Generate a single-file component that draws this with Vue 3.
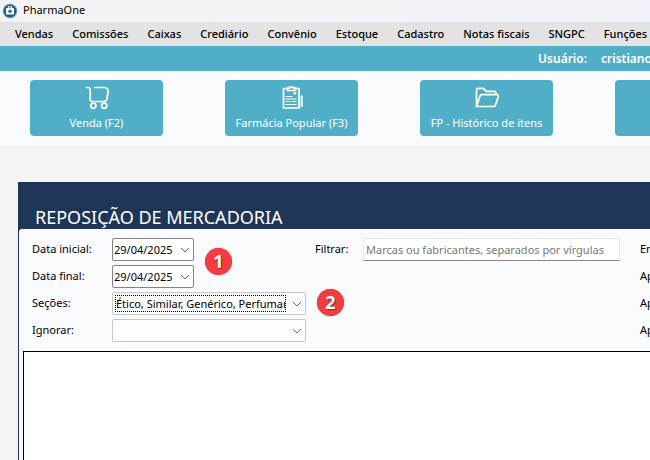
<script setup>
import { ref } from 'vue'

const menus = [
  'Vendas', 'Comissões', 'Caixas', 'Crediário', 'Convênio',
  'Estoque', 'Cadastro', 'Notas fiscais', 'SNGPC', 'Funções a'
]

const shortcuts = [
  { icon: 'cart', label: 'Venda (F2)' },
  { icon: 'clipboard', label: 'Farmácia Popular (F3)' },
  { icon: 'folder', label: 'FP - Histórico de itens' },
  { icon: '', label: '' }
]

const options = ['En', 'Ap', 'Ap', 'Ap']

const startDate = ref('29/04/2025')
const endDate = ref('29/04/2025')
const sections = ref('Ético, Similar, Genérico, Perfumaria')
const ignored = ref('')
const brandFilter = ref('')
</script>

<template>
  <div class="app">
    <header class="titlebar">
      <svg class="logo" viewBox="0 0 16 16">
        <circle cx="8" cy="8" r="7.5" fill="#9db4c4" />
        <circle cx="8" cy="8" r="6.5" fill="#17608f" />
        <path d="M6.3 5V3.8h3.4V5" fill="none" stroke="#fff" />
        <rect x="4" y="5" width="8" height="6.5" rx="1" fill="#fff" />
        <path d="M8 6.3v4M6 8.3h4" stroke="#17608f" stroke-width="1.3" />
      </svg>
      <span>PharmaOne</span>
    </header>

    <nav class="menubar">
      <button v-for="menu in menus" :key="menu" type="button">{{ menu }}</button>
    </nav>

    <div class="userbar">
      <span>Usuário:</span>
      <span class="user">cristiano</span>
    </div>

    <div class="toolbar">
      <button v-for="(item, index) in shortcuts" :key="index" class="shortcut" type="button">
        <svg v-if="item.icon === 'cart'" viewBox="0 0 24 24">
          <path d="M.8 1.500h2.400c1.500 0 2 .8 2 2v3.200c.2 3 .3 4.600 0 5.900-.5 1.800.6 2.900 2.400 2.900h11.400c1.800 0 2.500-1 2.900-2.600l1.100-6.400c.5-3-.6-5-3.600-5H9" />
          <circle cx="8.300" cy="19.800" r="2.600" />
          <circle cx="19.200" cy="19.800" r="2.600" />
        </svg>
        <svg v-else-if="item.icon === 'clipboard'" viewBox="0 0 24 24">
          <path d="M7.500 2.500H3.500v19.500h15.500V2.500h-4" />
          <path d="M7.500 4.500V2.200h2V1h4v1.200h2v2.300z" />
          <path d="M14.800 5.500v3.500M13 7.200h3.500M5.500 10.500h7M5.500 13h11M5.500 15.500h11M5.500 18.500h11" stroke-width="1" />
          <path d="M21.700 9.500v11.500" stroke-width="2" />
        </svg>
        <svg v-else-if="item.icon === 'folder'" viewBox="0 0 24 24">
          <path d="M1.500 20.500V4.200c0-1.200.6-1.900 1.800-1.900h5l3.200 3.100h7.700c1.100 0 1.600.6 1.600 1.700v1.700M1.500 20.500h17.200c1 0 1.500-.5 1.700-1.300l3.100-9c.3-1-.1-1.500-1.100-1.500H6.800c-1 0-1.500.4-1.800 1.300z" />
        </svg>
        <span>{{ item.label }}</span>
      </button>
    </div>

    <main class="panel">
      <h1>REPOSIÇÃO DE MERCADORIA</h1>
      <div class="panel-body">
        <form class="filters" @submit.prevent>
          <div class="fields">
            <label for="start">Data inicial:</label>
            <div class="control date">
              <input id="start" v-model="startDate" type="text">
              <button type="button" aria-label="Abrir calendário">
                <svg class="chevron" viewBox="0 0 10 6"><path d="M1 1l4 4 4-4" /></svg>
              </button>
            </div>

            <label for="end">Data final:</label>
            <div class="control date">
              <input id="end" v-model="endDate" type="text">
              <button type="button" aria-label="Abrir calendário">
                <svg class="chevron" viewBox="0 0 10 6"><path d="M1 1l4 4 4-4" /></svg>
              </button>
              <span class="badge badge-dates">1</span>
            </div>

            <label for="sections">Seções:</label>
            <div class="control combo focused">
              <select id="sections" v-model="sections">
                <option>Ético, Similar, Genérico, Perfumaria</option>
              </select>
              <svg class="chevron" viewBox="0 0 10 6"><path d="M1 1l4 4 4-4" /></svg>
              <span class="badge badge-sections">2</span>
            </div>

            <label for="ignored">Ignorar:</label>
            <div class="control combo">
              <select id="ignored" v-model="ignored">
                <option value=""></option>
              </select>
              <svg class="chevron" viewBox="0 0 10 6"><path d="M1 1l4 4 4-4" /></svg>
            </div>
          </div>

          <div class="search">
            <label for="brands">Filtrar:</label>
            <input id="brands" v-model="brandFilter" type="text" placeholder="Marcas ou fabricantes, separados por vírgulas">
          </div>

          <div class="options">
            <span v-for="(option, index) in options" :key="index">{{ option }}</span>
          </div>
        </form>

        <div class="results"></div>
      </div>
    </main>
  </div>
</template>

<style>
body {
  background: #f4f4f4;
}
</style>

<style scoped>
.app {
  display: flex;
  flex-direction: column;
  min-height: 100vh;
  overflow: hidden;
  background: #f4f4f4;
  color: #000;
  font-family: "Noto Sans", "Open Sans", sans-serif;
  font-size: 11px;
  white-space: nowrap;
}

button,
input,
select {
  font: inherit;
  color: inherit;
  border: 0;
  padding: 0;
  margin: 0;
  background: none;
}

.titlebar {
  display: flex;
  align-items: center;
  gap: 5px;
  height: 22px;
  padding-left: 2px;
  background: linear-gradient(90deg, #f3f3f3, #f0f2f9);
  line-height: 20px;
}

.titlebar span {
  height: 22px;
}

.logo {
  width: 16px;
  height: 16px;
}

.menubar {
  display: flex;
  gap: 19px;
  height: 24px;
  padding-left: 15px;
  background: #e3e3e3;
  font-weight: 500;
}

.menubar button {
  flex-shrink: 0;
  padding-bottom: 1px;
}

.userbar {
  display: flex;
  justify-content: flex-end;
  align-items: center;
  gap: 14px;
  height: 25px;
  background: #50afc7;
  color: #fff;
  font-size: 12px;
  font-weight: 600;
}

.user {
  width: 49px;
}

.toolbar {
  display: flex;
  gap: 62px;
  padding: 9px 30px 10px;
  background: #f8fafd;
}

.shortcut {
  display: flex;
  flex-direction: column;
  align-items: center;
  flex: 0 0 133px;
  height: 56px;
  padding-top: 6px;
  border-radius: 4px;
  background: #50afc7;
  color: #fff;
  line-height: 26px;
}

.shortcut svg {
  width: 24px;
  height: 24px;
  fill: none;
  stroke: #fff;
  stroke-width: 1.7;
}

.panel {
  display: flex;
  flex-direction: column;
  flex: 1;
  margin: 36px 0 0 18px;
  padding-left: 1px;
  background: #1e3557;
}

h1 {
  margin: 0;
  padding: 23px 16px 0;
  color: #fff;
  font-size: 18px;
  font-weight: 400;
  line-height: 24px;
}

.panel-body {
  display: flex;
  flex-direction: column;
  flex: 1;
  padding: 9px 0 0 4px;
  border-top-left-radius: 3px;
  background: #f8fafd;
}

.filters {
  display: flex;
  padding-left: 9px;
  line-height: 22px;
}

.fields {
  display: grid;
  grid-template-columns: 80px 194px;
  grid-auto-rows: 23px;
  row-gap: 4px;
}

.control {
  position: relative;
  display: flex;
  align-items: center;
  box-sizing: border-box;
  border: 1px solid #c4c6ca;
  border-radius: 2px;
  background: #fff;
}

.date {
  width: 82px;
  border-color: #808285;
}

.date input {
  flex: 1;
  min-width: 0;
  padding-left: 1px;
}

.date button {
  display: flex;
  align-items: center;
  justify-content: center;
  width: 17px;
  height: 21px;
}

.chevron {
  width: 10px;
  height: 6px;
  fill: none;
  stroke: #66686b;
  stroke-width: 1;
}

.combo {
  background: #fdfdfe;
}

.combo select {
  width: 100%;
  height: 21px;
  padding: 0 20px 0 3px;
  appearance: none;
  outline: none;
}

.combo .chevron {
  position: absolute;
  top: 8px;
  right: 3px;
  pointer-events: none;
}

.focused::after {
  content: "";
  position: absolute;
  top: 2px;
  bottom: 2px;
  left: 2px;
  right: 19px;
  border: 1px dotted #000;
  pointer-events: none;
}

.badge {
  position: absolute;
  width: 27px;
  height: 27px;
  border-radius: 50%;
  background: #f23c3f;
  box-shadow: 0 0 1px #7d4a4c;
  color: #fff;
  font-size: 18px;
  font-weight: 700;
  line-height: 26px;
  text-align: center;
  text-shadow: 1px 1px 1px #7d2a2c;
}

.badge-dates {
  left: 92px;
  top: -18px;
}

.badge-sections {
  left: 204px;
  top: -4px;
}

.search {
  display: flex;
  align-items: flex-start;
  flex: 1 0 0;
  margin-left: 9px;
}

.search label {
  width: 48px;
}

.search input {
  flex: 1;
  min-width: 0;
  box-sizing: border-box;
  height: 23px;
  padding: 0 2px;
  border: 1px solid #e4e5e8;
  border-bottom-color: #858789;
  background: #fff;
}

.search input::placeholder {
  color: #777;
  opacity: 1;
}

.options {
  display: grid;
  grid-auto-rows: 23px;
  row-gap: 4px;
  width: 10px;
  margin-left: 20px;
}

.results {
  flex: 1;
  margin-top: 9px;
  border-top: 1px solid #000;
  border-left: 1px solid #000;
  background: #fff;
}
</style>
